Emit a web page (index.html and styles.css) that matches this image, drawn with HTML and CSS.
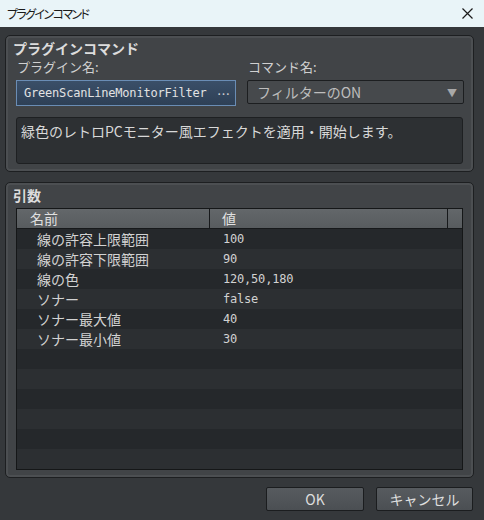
FILE: index.html
```html
<!doctype html>
<html lang="ja">
	<head>
		<meta charset="utf-8">
		<title>プラグインコマンド</title>
		<link rel="stylesheet" href="styles.css">
	</head>
	<body>
		<div class="titlebar">
			<span class="titlebar-text">プラグインコマンド</span>
			<svg class="close" width="11" height="11" viewBox="0 0 11 11">
				<path d="M0.5 0.5 L10.5 10.5 M10.5 0.5 L0.5 10.5" stroke="#1a1a1a" stroke-width="1.2" fill="none"/>
			</svg>
		</div>

		<div class="content">
			<div class="group group-command">
				<div class="group-title">プラグインコマンド</div>
				<div class="fields">
					<div class="field">
						<div class="label">プラグイン名:</div>
						<div class="plugin-box">
							<span class="mono">GreenScanLineMonitorFilter</span>
							<span class="dots">⋯</span>
						</div>
					</div>
					<div class="field">
						<div class="label">コマンド名:</div>
						<div class="select">
							<span>フィルターのON</span>
							<span class="arrow">▼</span>
						</div>
					</div>
				</div>
				<div class="description">緑色のレトロPCモニター風エフェクトを適用・開始します。</div>
			</div>

			<div class="group group-args">
				<div class="group-title">引数</div>
				<div class="table">
					<div class="row head">
						<div class="cell name">名前</div>
						<div class="cell value">値</div>
						<div class="cell tail"></div>
					</div>
					<div class="row"><div class="cell name">線の許容上限範囲</div><div class="cell value mono">100</div></div>
					<div class="row"><div class="cell name">線の許容下限範囲</div><div class="cell value mono">90</div></div>
					<div class="row"><div class="cell name">線の色</div><div class="cell value mono">120,50,180</div></div>
					<div class="row"><div class="cell name">ソナー</div><div class="cell value mono">false</div></div>
					<div class="row"><div class="cell name">ソナー最大値</div><div class="cell value mono">40</div></div>
					<div class="row"><div class="cell name">ソナー最小値</div><div class="cell value mono">30</div></div>
					<div class="row"></div>
					<div class="row"></div>
					<div class="row"></div>
					<div class="row"></div>
					<div class="row"></div>
					<div class="row"></div>
				</div>
			</div>

			<div class="buttons">
				<div class="button ok">OK</div>
				<div class="button">キャンセル</div>
			</div>
		</div>
	</body>
</html>
```

FILE: styles.css
```css
body {
	margin: 0;
	width: 484px;
	height: 520px;
	overflow: hidden;
	background: #35383b;
	font-family: "Noto Sans CJK JP", "DejaVu Sans", sans-serif;
	color: #d6d6d6;
}

.mono {
	font-family: "DejaVu Sans Mono", "Noto Sans CJK JP", monospace;
	font-size: 12px;
	letter-spacing: -0.2px;
}

/* window chrome */
.titlebar {
	height: 27px;
	background: #e9f4f8;
	display: flex;
	align-items: center;
	justify-content: space-between;
	padding: 0 11px 0 7px;
}
.titlebar-text {
	font-size: 12px;
	letter-spacing: -1.6px;
	color: #1a1a1a;
	font-feature-settings: "palt";
}

.content {
	padding: 8px 10px 0 5px;
}

/* group boxes */
.group {
	background: #414447;
	border: 1px solid #1d1f21;
	border-radius: 5px;
	box-shadow: inset 0 0 0 2px #4c4f52;
	padding: 4px 10px 7px 10px;
}
.group-args { margin-top: 10px; }

.group-title {
	font-size: 14px;
	font-weight: bold;
	line-height: 16px;
	margin-left: -3px;
	color: #dcdcdc;
}

.fields {
	display: grid;
	grid-template-columns: 220px 217px;
	column-gap: 11px;
	margin-top: 3px;
}
.label {
	font-size: 13px;
	line-height: 16px;
	padding-left: 1px;
	color: #d0d0d0;
}

.plugin-box {
	margin-top: 5px;
	height: 24px;
	border: 1px solid #6a8db5;
	background: linear-gradient(#3a4f68, #2e4056);
	display: flex;
	align-items: center;
	justify-content: space-between;
	padding: 0 5px 0 7px;
	color: #e2e2e2;
}
.dots { font-size: 13px; color: #d0d0d0; }

.select {
	margin-top: 5px;
	height: 22px;
	border: 1px solid #1c1e20;
	border-radius: 2px;
	background: #46494c;
	display: flex;
	align-items: center;
	justify-content: space-between;
	padding: 0 6px 0 9px;
	font-size: 14px;
	color: #bdbdbd;
}
.arrow { font-size: 10px; color: #a8a8a8; }

.description {
	margin-top: 11px;
	height: 41px;
	border: 1px solid #1e2022;
	border-radius: 3px;
	background: #2d3033;
	padding: 2px 4px;
	font-size: 14px;
	line-height: 22px;
	color: #d8d8d8;
}

/* argument list */
.table {
	margin-top: 5px;
	border: 1px solid #151718;
	background: #25282b;
}
.row {
	height: 20px;
	display: flex;
	align-items: center;
	font-size: 14px;
	color: #d2d2d2;
}
.row:nth-child(even) { background: #25282b; }
.row:nth-child(odd) { background: #2c2f32; }
.row.head {
	background: linear-gradient(#63676a, #585c5f);
	border-bottom: 1px solid #17191b;
	height: 19px;
	color: #e0e0e0;
}
.cell.name { width: 173px; padding-left: 20px; }
.cell.value { padding-left: 13px; }
.head .cell.name {
	padding-left: 13px;
	width: 179px;
	border-right: 1px solid #17191b;
	height: 19px;
	line-height: 19px;
}
.head .cell.value {
	padding-left: 12px;
	width: 225px;
	border-right: 1px solid #17191b;
	height: 19px;
	line-height: 19px;
}

/* dialog buttons */
.buttons {
	display: flex;
	justify-content: flex-end;
	gap: 12px;
	margin-top: 9px;
	padding-right: 1px;
}
.button {
	width: 95px;
	height: 22px;
	border: 1px solid #1b1d1f;
	border-radius: 2px;
	background: linear-gradient(#575b5f, #4b4f53);
	display: flex;
	align-items: center;
	justify-content: center;
	font-size: 14px;
	color: #dedede;
}
.button.ok { width: 96px; }
```
